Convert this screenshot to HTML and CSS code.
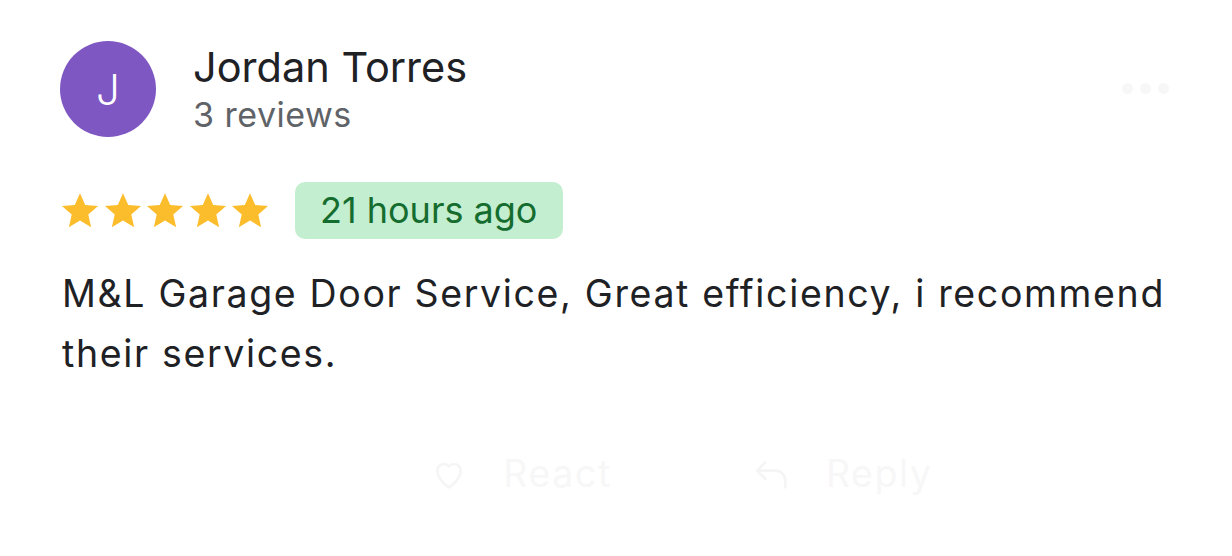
FILE: index.html
```html
<!DOCTYPE html>
<html lang="en">
<head>
  <meta charset="UTF-8">
  <meta name="viewport" content="width=device-width, initial-scale=1.0">
  <title>Review</title>
  <link rel="stylesheet" href="styles.css">
</head>
<body>
  <div class="review">
    <div class="review-head">
      <div class="avatar">J</div>
      <div class="author">
        <div class="name">Jordan Torres</div>
        <div class="count">3 reviews</div>
      </div>
      <div class="more"><span></span><span></span><span></span></div>
    </div>

    <div class="rating">
      <div class="stars">
        <svg viewBox="2 2.5 20 19"><path d="M12 2.5l2.9 6.6 7.1.6-5.4 4.7 1.6 7-6.2-3.7-6.2 3.7 1.6-7L2 9.7l7.1-.6z"/></svg>
        <svg viewBox="2 2.5 20 19"><path d="M12 2.5l2.9 6.6 7.1.6-5.4 4.7 1.6 7-6.2-3.7-6.2 3.7 1.6-7L2 9.7l7.1-.6z"/></svg>
        <svg viewBox="2 2.5 20 19"><path d="M12 2.5l2.9 6.6 7.1.6-5.4 4.7 1.6 7-6.2-3.7-6.2 3.7 1.6-7L2 9.7l7.1-.6z"/></svg>
        <svg viewBox="2 2.5 20 19"><path d="M12 2.5l2.9 6.6 7.1.6-5.4 4.7 1.6 7-6.2-3.7-6.2 3.7 1.6-7L2 9.7l7.1-.6z"/></svg>
        <svg viewBox="2 2.5 20 19"><path d="M12 2.5l2.9 6.6 7.1.6-5.4 4.7 1.6 7-6.2-3.7-6.2 3.7 1.6-7L2 9.7l7.1-.6z"/></svg>
      </div>
      <div class="when">21 hours ago</div>
    </div>

    <p class="text">M&amp;L Garage Door Service, Great efficiency, i recommend their services.</p>

    <div class="actions">
      <div class="action">
        <svg viewBox="0 0 24 24"><path d="M12 20s-7-4.4-7-10a4 4 0 0 1 7-2.6A4 4 0 0 1 19 10c0 5.6-7 10-7 10z"/></svg>
        <span>React</span>
      </div>
      <div class="action">
        <svg viewBox="0 0 24 24"><path d="M8 5L3 10l5 5M3 10h11a6 6 0 0 1 6 6v4"/></svg>
        <span>Reply</span>
      </div>
    </div>
  </div>
</body>
</html>
```

FILE: styles.css
```css
/* Base */
* { margin: 0; padding: 0; box-sizing: border-box; }
body {
  background: #fff;
  font-family: Inter, "Noto Sans", sans-serif;
  color: #202124;
}

/* Card */
.review { padding: 41px 62px 0 62px; }

/* Header */
.review-head { display: flex; align-items: flex-start; }
.avatar {
  width: 96px; height: 96px; border-radius: 50%;
  background: #7e57c2; color: #fff;
  display: flex; align-items: center; justify-content: center;
  font-size: 42px; font-weight: 300;
  flex-shrink: 0;
  margin-left: -2px;
}
.author { margin-left: 38px; flex: 1; padding-top: 1px; }
.name { font-size: 41.5px; font-weight: 400; line-height: 50px; color: #202124; margin-left: -1px; }
.count { font-size: 34px; line-height: 42px; letter-spacing: 0.5px; color: #5f6368; margin-top: 2px; margin-left: -1px; }
.more { display: flex; gap: 7px; margin-top: 42px; margin-right: 1px; }
.more span { width: 11px; height: 11px; border-radius: 50%; background: #f7f7f7; }

/* Rating */
.rating { display: flex; align-items: center; margin-top: 45px; }
.stars { display: flex; gap: 6.5px; }
.stars svg { width: 36px; height: 34.5px; fill: #fcbd2d; }
.when {
  margin-left: 27px;
  background: #c4eed0; color: #146c2e;
  font-size: 36px; line-height: 57px;
  padding: 0 26px 0 25px; border-radius: 10px;
}

/* Body */
.text { margin-top: 25px; font-size: 37.5px; line-height: 60px; letter-spacing: 1.65px; color: #202124; max-width: 1120px; }

/* Actions (faded) */
.actions { display: flex; justify-content: center; gap: 140px; margin-top: 67px; padding-left: 130px; }
.action { display: flex; align-items: center; gap: 34px; color: #f7f7f7; font-size: 37.5px; letter-spacing: 1.6px; }
.action svg { width: 40px; height: 40px; fill: none; stroke: #f5f5f5; stroke-width: 1.6; stroke-linecap: round; stroke-linejoin: round; }
```
